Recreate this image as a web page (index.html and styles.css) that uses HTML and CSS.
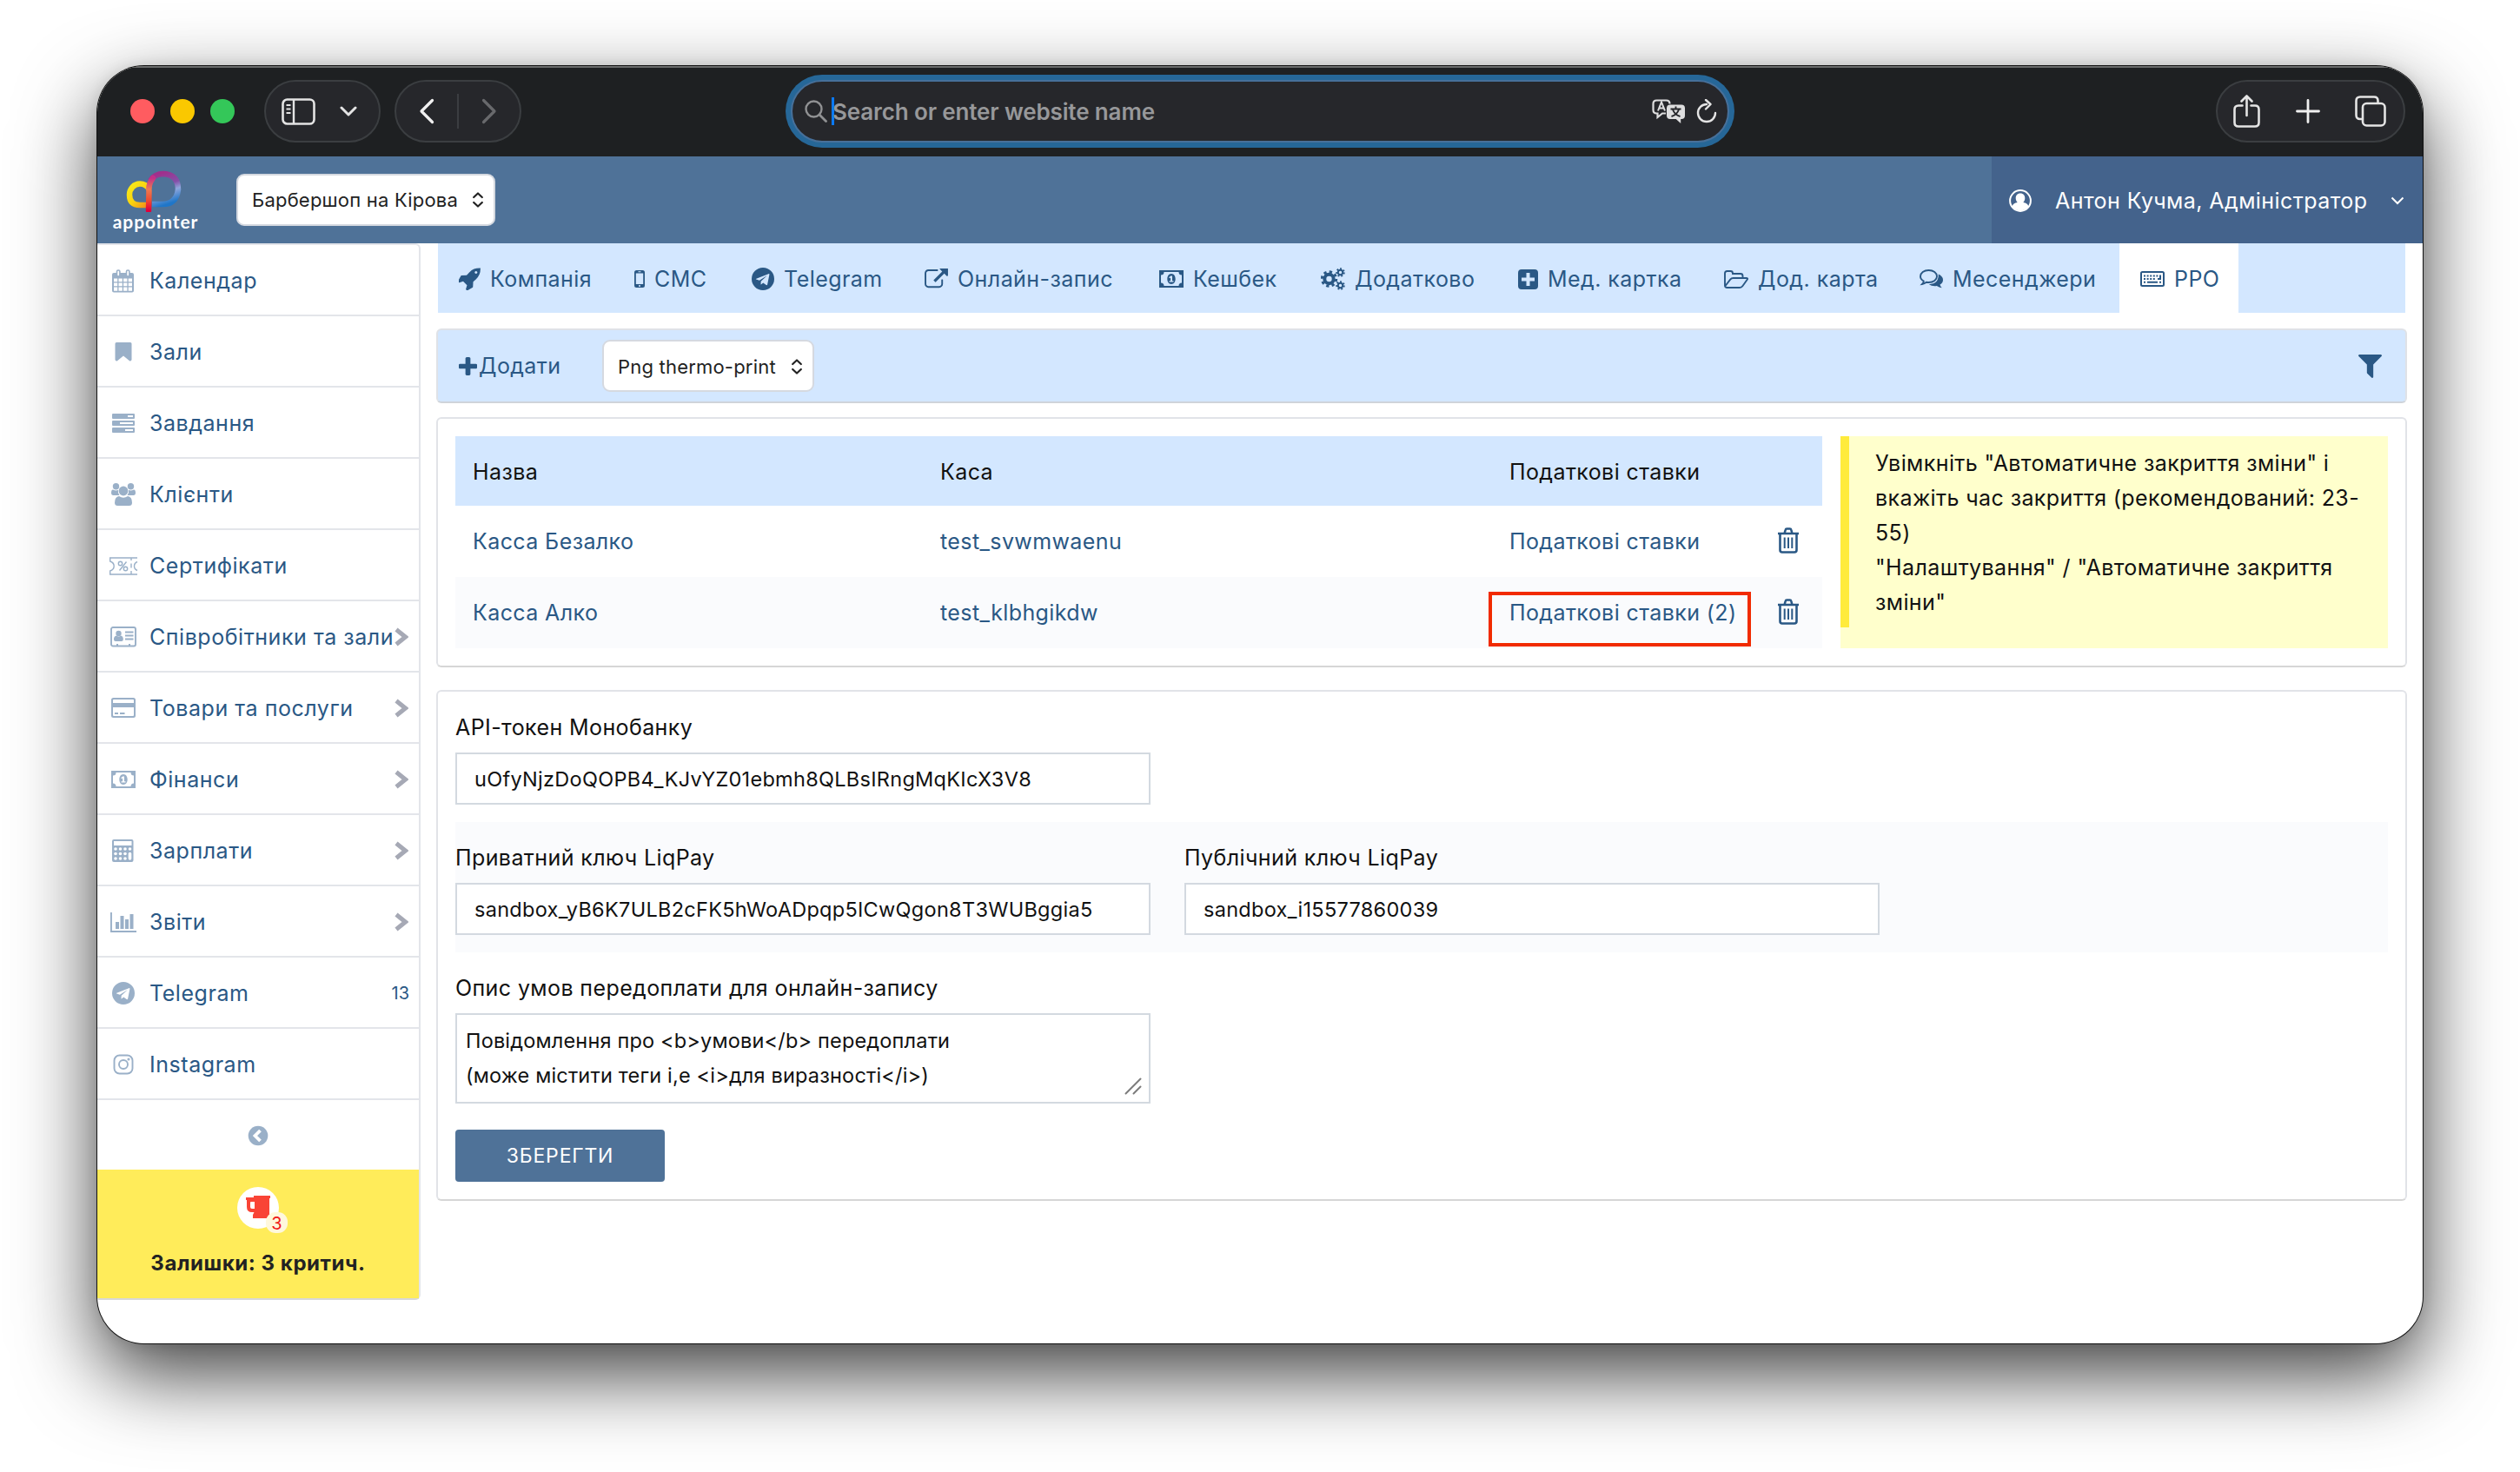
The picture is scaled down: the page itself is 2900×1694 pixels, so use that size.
FILE: index.html
```
<!DOCTYPE html>
<html lang="uk">
<head>
    <meta charset="UTF-8">
    <meta name="viewport" content="width=device-width, initial-scale=1.0">
    <link rel="stylesheet" href="styles.css">
    <title>Appointer - РРО</title>
</head>
<body>
    <!-- shared icons -->
    <svg class="sprite" width="0" height="0">
        <symbol id="i-telegram" viewBox="0 0 26 26"><path fill-rule="evenodd" d="M13 0a13 13 0 1 1 0 26a13 13 0 0 1 0-26zM19.3 7.2L5.3 12.7q-1 .5 0 .9l3.600 1.100 8.200-5.200q.7-.3.300.1l-6.700 6.200-.2 3.700q.5 0 .9-.4l1.800-1.700 3.600 2.700q1 .4 1.300-.7l2.300-11.300q.2-1.300-1.100-.9z"/></symbol>
        <symbol id="i-money" viewBox="0 0 28 20"><path fill-rule="evenodd" d="M0 0h28v20H0zM5.500 2a3.500 3.500 0 0 1-3.500 3.500v9a3.500 3.500 0 0 1 3.500 3.500h17a3.500 3.500 0 0 1 3.500-3.500v-9a3.500 3.500 0 0 1-3.500-3.500z"/><path fill-rule="evenodd" d="M14 4c3 0 4.700 2.800 4.700 6s-1.700 6-4.700 6-4.700-2.800-4.700-6 1.700-6 4.700-6zM13.200 6.500l-2 1.700.9 1.100 1-.8v3.800h-1.600v1.300h5v-1.300h-1.500V6.500z"/></symbol>
        <symbol id="i-trash" viewBox="0 0 26 30"><path d="M1 7h24M8.500 7l1.200-4.200q.3-1.300 1.500-1.300h3.600q1.200 0 1.500 1.300L17.500 7M3.500 7v19q0 2.500 2.500 2.500h14q2.500 0 2.500-2.500V7" fill="none" stroke="currentColor" stroke-width="2.600"/><path d="M8.700 11.500v12.500M13 11.500v12.500M17.300 11.500v12.500" stroke="currentColor" stroke-width="2"/></symbol>
        <symbol id="i-updown" viewBox="0 0 12 18"><path d="M1.200 6L6 1.500 10.800 6M1.200 12L6 16.500 10.800 12" fill="none" stroke="currentColor" stroke-width="2.200" stroke-linejoin="round" stroke-linecap="round"/></symbol>
        <symbol id="i-next" viewBox="0 0 16 22"><path d="M2 2.500L12.500 11 2 19.500" fill="none" stroke="currentColor" stroke-width="5"/></symbol>
    </svg>

    <div class="window">
        <div class="titlebar">
            <div class="lights">
                <span class="light red"></span>
                <span class="light yellow"></span>
                <span class="light green"></span>
            </div>
            <div class="pill pill-sidebar">
                <svg width="39" height="31" viewBox="0 0 39 31"><rect x="1.500" y="1.500" width="36" height="28" rx="5" fill="none" stroke="#e4e4e4" stroke-width="2.600"/><path d="M14 1.500v28" stroke="#e4e4e4" stroke-width="2.400"/><path d="M5.500 8h5M5.500 12.500h5M5.500 17h5" stroke="#e4e4e4" stroke-width="1.800"/></svg>
                <svg width="20" height="12" viewBox="0 0 20 12"><path d="M2 2l8 8 8-8" fill="none" stroke="#e4e4e4" stroke-width="3" stroke-linecap="round" stroke-linejoin="round"/></svg>
            </div>
            <div class="pill pill-nav">
                <svg width="18" height="30" viewBox="0 0 18 30"><path d="M15.500 2.500L3 15l12.500 12.500" fill="none" stroke="#f0f0f0" stroke-width="3.200" stroke-linecap="round" stroke-linejoin="round"/></svg>
                <span class="pill-line"></span>
                <svg width="18" height="30" viewBox="0 0 18 30"><path d="M2.500 2.500L15 15 2.500 27.500" fill="none" stroke="#68696c" stroke-width="3.200" stroke-linecap="round" stroke-linejoin="round"/></svg>
            </div>
            <div class="address">
                <svg width="26" height="26" viewBox="0 0 26 26"><circle cx="10.500" cy="10.500" r="9" fill="none" stroke="#909193" stroke-width="2.400"/><path d="M17 17l7.500 7.500" stroke="#909193" stroke-width="2.800" stroke-linecap="round"/></svg>
                <span class="caret"></span>
                <span class="placeholder">Search or enter website name</span>
                <svg class="translate" width="39" height="28" viewBox="0 0 39 28"><path d="M16 16.500h-4l-5.500 4.500v-4.500H5.500q-4 0-4-4v-7q0-4 4-4h11q4 0 4 4" fill="none" stroke="#dededf" stroke-width="2.200"/><path d="M7 13.500l4-10 4 10M8.500 10.500h5" fill="none" stroke="#dededf" stroke-width="2"/><path d="M21 6.500h13q4 0 4 4v8.500q0 4-4 4h-.8v5l-5.500-5H21q-4 0-4-4v-8.500q0-4 4-4z" fill="#dededf"/><path d="M27.500 8.500v3M21.500 11.500h12M24 12q2 6 8.500 8M31 12q-2 6-8.500 8" fill="none" stroke="#26272b" stroke-width="1.900"/></svg>
                <svg width="24" height="28" viewBox="0 0 24 28"><path d="M12 6a10 10 0 1 0 10 10" fill="none" stroke="#e4e4e4" stroke-width="2.400" stroke-linecap="round"/><path d="M11 1l5.500 5-5.500 5.500" fill="none" stroke="#e4e4e4" stroke-width="2.400" stroke-linecap="round" stroke-linejoin="round"/></svg>
            </div>
            <div class="pill pill-tools">
                <svg width="31" height="38" viewBox="0 0 31 38"><path d="M10.500 12.500H6q-4.500 0-4.500 4.500v15q0 4.500 4.500 4.500h19q4.500 0 4.500-4.500V17q0-4.500-4.500-4.500h-4.500M15.500 24V2M9.500 7.500l6-6 6 6" fill="none" stroke="#e4e4e4" stroke-width="2.600" stroke-linecap="round" stroke-linejoin="round"/></svg>
                <svg width="28" height="28" viewBox="0 0 28 28"><path d="M14 1.500v25M1.500 14h25" stroke="#f0f0f0" stroke-width="2.800" stroke-linecap="round"/></svg>
                <svg width="36" height="36" viewBox="0 0 36 36"><path d="M9 27H6q-4.500 0-4.500-4.500V6Q1.500 1.500 6 1.500h16q4.500 0 4.500 4.500v3" fill="none" stroke="#e4e4e4" stroke-width="2.600"/><rect x="9" y="9" width="25.500" height="25.500" rx="4.500" fill="none" stroke="#e4e4e4" stroke-width="2.600"/></svg>
            </div>
        </div>

        <div class="header">
            <div class="logo">
                <svg width="64" height="48" viewBox="0 0 64 48">
                    <defs>
                        <linearGradient id="g1" x1="0" y1="0" x2="1" y2="1"><stop offset="0" stop-color="#f4ea1c"/><stop offset=".5" stop-color="#fbd40e"/><stop offset="1" stop-color="#f08a1c"/></linearGradient>
                        <linearGradient id="g2" x1=".3" y1="0" x2=".6" y2="1"><stop offset="0" stop-color="#a02f8c"/><stop offset=".4" stop-color="#8450a8"/><stop offset=".62" stop-color="#8fa6dc"/><stop offset="1" stop-color="#1f76c8"/></linearGradient>
                        <linearGradient id="g3" x1="0" y1="0" x2="0" y2="1"><stop offset="0" stop-color="#c22f88"/><stop offset=".35" stop-color="#f07a50"/><stop offset=".7" stop-color="#f04a30"/><stop offset="1" stop-color="#e4003a"/></linearGradient>
                    </defs>
                    <path d="M27 22Q23 15.500 16 15.500A12 12.500 0 0 0 4 28Q4 40 16 40H24" fill="none" stroke="url(#g1)" stroke-width="6.500"/>
                    <path d="M28 12Q33 4 43 4Q60 5 60 22Q58 39 42 39H30" fill="none" stroke="url(#g2)" stroke-width="6.500"/>
                    <path d="M31 9Q25.500 16 26.500 24L26 46" fill="none" stroke="url(#g3)" stroke-width="6.500" stroke-linecap="round"/>
                </svg>
                <span>appointer</span>
            </div>
            <div class="select branch">Барбершоп на Кірова<svg width="12" height="18"><use href="#i-updown"/></svg></div>
            <div class="user">
                <svg width="26" height="26" viewBox="0 0 26 26"><circle cx="13" cy="13" r="11.900" fill="none" stroke="#fff" stroke-width="2"/><path d="M13 4.500c3.500 0 5.300 2.400 5.300 5.600 0 2-.8 3.900-2 5 3.500.3 5.500 2 6 4.500A11.500 11.500 0 0 1 13 24.500a11.500 11.500 0 0 1-9.300-4.900c.5-2.500 2.500-4.200 6-4.500-1.200-1.100-2-3-2-5 0-3.200 1.800-5.600 5.300-5.600z" fill="#fff"/></svg>
                <span>Антон Кучма, Адміністратор</span>
                <svg class="arrow" width="16" height="10" viewBox="0 0 16 10"><path d="M1.500 1.500L8 8l6.500-6.500" fill="none" stroke="#fff" stroke-width="2"/></svg>
            </div>
        </div>

        <div class="page">
            <div class="sidebar">
                <a class="item">
                    <svg width="26" height="27" viewBox="0 0 26 27"><path fill-rule="evenodd" d="M2 4h21q2 0 2 2v18.500q0 2-2 2H2q-2 0-2-2V6q0-2 2-2zM2 10.500v3.700h4.200v-3.700zM7.500 10.500v3.700h4.300v-3.700zM13.100 10.500v3.700h4.300v-3.700zM18.700 10.500v3.700H23v-3.700zM2 15.500v3.700h4.200v-3.700zM7.500 15.500v3.700h4.300v-3.700zM13.100 15.500v3.700h4.300v-3.700zM18.700 15.500v3.700H23v-3.700zM2 20.500v4.200h4.200v-4.200zM7.500 20.500v4.200h4.300v-4.200zM13.100 20.500v4.200h4.300v-4.200zM18.700 20.500v4.200H23v-4.200z"/><rect x="5.500" y="1" width="3.400" height="7" rx="1.500" fill="#fff" stroke="currentColor" stroke-width="1.600"/><rect x="16.500" y="1" width="3.400" height="7" rx="1.500" fill="#fff" stroke="currentColor" stroke-width="1.600"/></svg>
                    <span>Календар</span>
                </a>
                <a class="item">
                    <svg width="20" height="24" viewBox="0 0 20 24"><path d="M2 1h16q1.500 0 1.500 1.500v18.500q-.5 2-2.500 1.200L10 16.500l-7 5.700Q1 23 .5 21V2.500Q.5 1 2 1z"/></svg>
                    <span>Зали</span>
                </a>
                <a class="item">
                    <svg width="26" height="22" viewBox="0 0 26 22"><path fill-rule="evenodd" d="M1 0h24q1 0 1 1v4q0 1-1 1H1Q0 6 0 5V1q0-1 1-1zM18 2v2h6V2zM1 8h24q1 0 1 1v4q0 1-1 1H1q-1 0-1-1V9q0-1 1-1zM9 10v2h15v-2zM1 16h24q1 0 1 1v4q0 1-1 1H1q-1 0-1-1v-4q0-1 1-1zM15 18v2h9v-2z"/></svg>
                    <span>Завдання</span>
                </a>
                <a class="item">
                    <svg width="28" height="26" viewBox="0 0 28 26"><circle cx="5.500" cy="3.800" r="3.700"/><circle cx="22.500" cy="3.800" r="3.700"/><path d="M2 7.500q3 1.500 6 .5-.8 3.500 1.500 6H2q-2-.2-2-2.500Q0 7.500 2 7.500zM26 7.500q-3 1.500-6 .5.800 3.500-1.500 6H26q2-.2 2-2.500 0-4-2-4z"/><circle cx="14" cy="9" r="5.400"/><path d="M9 15q5 3.500 10 0 5 .5 5 7.500 0 3.500-3.500 3.500h-13Q4 26 4 22.500 4 15.500 9 15z"/></svg>
                    <span>Клієнти</span>
                </a>
                <a class="item">
                    <svg class="outline" width="32" height="21" viewBox="0 0 32 21" stroke-width="1.400"><path d="M32 1H.7v4q4.500 1.500 4.500 5.500T.7 16v4H32M25 1v3M25 7.500v5M25 16v4M32 5.500q-3.500 1.500-3.500 5t3.500 5"/><circle cx="12.500" cy="7.500" r="2.200"/><circle cx="18.500" cy="13.500" r="2.200"/><path d="M19.500 5.500l-8 10"/></svg>
                    <span>Сертифікати</span>
                </a>
                <a class="item">
                    <svg width="30" height="24" viewBox="0 0 30 24"><rect x="1" y="1" width="28" height="21.500" rx="2" fill="none" stroke="currentColor" stroke-width="1.900"/><circle cx="9.500" cy="8" r="3.200"/><path d="M7 10.500q2.500 2 5 0 3 .5 2.800 4.500 0 2-2 2H6q-2 0-2-2-.2-4 3-4.500zM17 5.500h9.500v2H17zM17 9.500h9.500v2H17zM17 13.500h9.500v2H17zM7 20h2v3H7zM21 20h2v3h-2z"/></svg>
                    <span>Співробітники та зали</span><svg class="next" width="16" height="22"><use href="#i-next"/></svg>
                </a>
                <a class="item">
                    <svg width="28" height="24" viewBox="0 0 28 24"><path fill-rule="evenodd" d="M2.500 0h23Q28 0 28 2.500v18q0 2.500-2.500 2.500h-23Q0 23 0 20.500v-18Q0 0 2.500 0zM2 3v3h24V3q0-1-1-1H3Q2 2 2 3zM2 11v9q0 1 1 1h22q1 0 1-1v-9zM4 17h4v2H4zM10 17h5.500v2H10z"/></svg>
                    <span>Товари та послуги</span><svg class="next" width="16" height="22"><use href="#i-next"/></svg>
                </a>
                <a class="item">
                    <svg width="28" height="20"><use href="#i-money"/></svg>
                    <span>Фінанси</span><svg class="next" width="16" height="22"><use href="#i-next"/></svg>
                </a>
                <a class="item">
                    <svg width="26" height="26" viewBox="0 0 26 26"><path fill-rule="evenodd" d="M2 0h20.500q2 0 2 2v22q0 2-2 2H2q-2 0-2-2V2Q0 0 2 0zM2 2v5h20.500V2z"/><g fill="#fff"><circle cx="4" cy="11" r="1.800"/><circle cx="9.500" cy="11" r="1.800"/><circle cx="15" cy="11" r="1.800"/><circle cx="20.500" cy="11" r="1.800"/><circle cx="4" cy="16.500" r="1.800"/><circle cx="9.500" cy="16.500" r="1.800"/><circle cx="15" cy="16.500" r="1.800"/><circle cx="4" cy="22" r="1.800"/><circle cx="9.500" cy="22" r="1.800"/><circle cx="15" cy="22" r="1.800"/><rect x="18.700" y="14.700" width="3.600" height="9" rx="1.800"/></g></svg>
                    <span>Зарплати</span><svg class="next" width="16" height="22"><use href="#i-next"/></svg>
                </a>
                <a class="item">
                    <svg width="30" height="23" viewBox="0 0 30 23"><path d="M0 0h1.900v21H30v2H0zM6 11h4v8H6zM11.500 4h4v15h-4zM17 8h4v11h-4zM22.500 2h4v17h-4z"/></svg>
                    <span>Звіти</span><svg class="next" width="16" height="22"><use href="#i-next"/></svg>
                </a>
                <a class="item">
                    <svg width="26" height="26"><use href="#i-telegram"/></svg>
                    <span>Telegram</span><b class="count">13</b>
                </a>
                <a class="item">
                    <svg class="outline" width="24" height="24" viewBox="0 0 24 24" stroke-width="1.900"><rect x="1.500" y="1.500" width="21" height="21" rx="6"/><circle cx="12" cy="12" r="5"/><circle cx="18" cy="6" r=".6"/></svg>
                    <span>Instagram</span>
                </a>
                <a class="collapse">
                    <svg width="24" height="24" viewBox="0 0 24 24"><circle cx="12" cy="12" r="11.300" fill="#9ab0c8"/><path d="M14.500 6L8.500 12l6 6" fill="none" stroke="#fff" stroke-width="3.800"/></svg>
                </a>
                <a class="stock">
                    <span class="cup">
                        <svg width="28" height="26" viewBox="0 0 28 26"><path fill-rule="evenodd" d="M0 2h9V0h19v3h-1v20l-.5 3H8v-4l1.500-3H7q-6 0-6-6V5H0zM5 8v5q0 2 2 2h3V7H6q-1 0-1 1z" fill="#f94436"/></svg>
                        <b>3</b>
                    </span>
                    <span class="stock-text">Залишки: 3 критич.</span>
                </a>
            </div>

            <div class="content">
                <div class="tabs">
                    <a><i><svg width="25" height="26" viewBox="100 120 1570 1600"><path d="M1440 448q0-40-28-68t-68-28-68 28-28 68 28 68 68 28 68-28 28-68zm224-288q0 249-75.500 430.500t-253.500 360.500q-81 80-195 176l-20 379q-2 16-16 26l-384 224q-7 4-16 4-12 0-23-9l-64-64q-13-14-8-32l85-276-281-281-276 85q-3 1-9 1-14 0-23-9l-64-64q-17-19-5-39l224-384q10-14 26-16l379-20q96-114 176-195 188-187 358-258t431-71q14 0 24 9.500t10 22.500z"/></svg></i>Компанія</a>
                    <a><i><svg width="12" height="20" viewBox="0 0 12 20"><path fill-rule="evenodd" d="M2.500 0h7Q12 0 12 2.500v15Q12 20 9.500 20h-7Q0 20 0 17.500v-15Q0 0 2.500 0zM1.800 3.500v12.500h8.400V3.500zM4.500 1.300v.9h3v-.9zM6 17a1 1 0 1 0 0 2.100A1 1 0 0 0 6 17z"/></svg></i>СМС</a>
                    <a><i><svg width="26" height="26"><use href="#i-telegram"/></svg></i>Telegram</a>
                    <a><i><svg width="27" height="24" viewBox="0 60 1792 1600"><path d="M1408 928v320q0 119-84.500 203.500t-203.500 84.500h-832q-119 0-203.500-84.500t-84.500-203.500v-832q0-119 84.500-203.500t203.500-84.500h704q14 0 23 9t9 23v64q0 14-9 23t-23 9h-704q-66 0-113 47t-47 113v832q0 66 47 113t113 47h832q66 0 113-47t47-113v-320q0-14 9-23t23-9h64q14 0 23 9t9 23zm384-864v512q0 26-19 45t-45 19-45-19l-176-176-652 652q-10 10-23 10t-23-10l-114-114q-10-10-10-23t10-23l652-652-176-176q-19-19-19-45t19-45 45-19h512q26 0 45 19t19 45z"/></svg></i>Онлайн-запис</a>
                    <a><i><svg width="28" height="20"><use href="#i-money"/></svg></i>Кешбек</a>
                    <a><i><svg class="outline" width="28" height="26" viewBox="0 0 28 26"><circle cx="9.500" cy="13" r="5.200" stroke-width="4"/><circle cx="9.500" cy="13" r="8.200" stroke-width="3" stroke-dasharray="3.220 3.220"/><circle cx="22.500" cy="5.500" r="2.700" stroke-width="2"/><circle cx="22.500" cy="5.500" r="4.300" stroke-width="1.900" stroke-dasharray="1.930 1.930"/><circle cx="22.500" cy="20.500" r="2.700" stroke-width="2"/><circle cx="22.500" cy="20.500" r="4.300" stroke-width="1.900" stroke-dasharray="1.930 1.930"/></svg></i>Додатково</a>
                    <a><i><svg width="23" height="23" viewBox="0 0 23 23"><path fill-rule="evenodd" d="M4 0h15q4 0 4 4v15q0 4-4 4H4q-4 0-4-4V4q0-4 4-4zM9.500 4v5.500H4v4h5.500V19h4v-5.500H19v-4h-5.500V4z"/></svg></i>Мед. картка</a>
                    <a><i><svg width="28" height="21" viewBox="0 0 28 21"><path d="M1 18V3.500Q1 1 3.500 1h4Q10 1 10 3.500V4h9q2.500 0 2.500 2.500V9M1.500 18L7.200 10.700Q8.500 9 10.500 9h15q2.500 0 1 2l-5 7q-1.300 2-3.500 2H3.500Q1 20 1 17.500" fill="none" stroke="currentColor" stroke-width="1.900"/></svg></i>Дод. карта</a>
                    <a><i><svg width="27" height="22" viewBox="0 0 27 22"><path d="M10.500 1C16 1 20 4 20 8s-4 7-9.500 7q-1.300 0-2.500-.2Q5.500 16.700 3 17q1.700-1.700 1.800-3.500Q1 11.500 1 8c0-4 4-7 9.500-7z" fill="none" stroke="currentColor" stroke-width="1.900"/><path d="M21.700 5.500Q27 8 27 12q0 3.500-3.500 5.500.2 1.800 2.200 3.700-3.200-.2-5.900-2.200-5.300.8-9-1.800Q22.500 16.500 21.700 5.500z"/></svg></i>Месенджери</a>
                    <a class="active"><i><svg width="28" height="18" viewBox="0 0 28 18"><rect x="1" y="1" width="26" height="16" rx="1.500" fill="none" stroke="currentColor" stroke-width="2"/><path d="M4 5.500h20" stroke="currentColor" stroke-width="2" stroke-dasharray="2 1.600"/><path d="M4 9h14" stroke="currentColor" stroke-width="2" stroke-dasharray="2 1.600"/><path d="M20 9h3V5M4 12.800h2M8 12.800h12M22 12.800h2" fill="none" stroke="currentColor" stroke-width="2"/></svg></i>РРО</a>
                </div>

                <div class="toolbar">
                    <a class="add"><svg width="21" height="21" viewBox="192 128 1408 1408"><path d="M1600 736v192q0 40-28 68t-68 28h-416v416q0 40-28 68t-68 28h-192q-40 0-68-28t-28-68v-416h-416q-40 0-68-28t-28-68v-192q0-40 28-68t68-28h416v-416q0-40 28-68t68-28h192q40 0 68 28t28 68v416h416q40 0 68 28t28 68z"/></svg>Додати</a>
                    <div class="select printer">Png thermo-print<svg width="12" height="18"><use href="#i-updown"/></svg></div>
                    <svg class="filter" width="27" height="27" viewBox="190 256 1412 1408"><path d="M1595 295q17 41-14 70l-493 493v742q0 42-39 59-13 5-25 5-27 0-45-19l-256-256q-19-19-19-45v-486l-493-493q-31-29-14-70 17-39 59-39h1280q42 0 59 39z"/></svg>
                </div>

                <div class="card registers">
                    <table class="table">
                        <tr><th>Назва</th><th>Каса</th><th>Податкові ставки</th><th></th></tr>
                        <tr><td>Касса Безалко</td><td>test_svwmwaenu</td><td>Податкові ставки</td><td><svg width="26" height="30"><use href="#i-trash"/></svg></td></tr>
                        <tr><td>Касса Алко</td><td>test_klbhgikdw</td><td class="marked">Податкові ставки (2)<span class="mark"></span></td><td><svg width="26" height="30"><use href="#i-trash"/></svg></td></tr>
                    </table>
                    <div class="hint">
                        <div class="hint-text">Увімкніть "Автоматичне закриття зміни" і вкажіть час закриття (рекомендований: 23-55)<br>"Налаштування" / "Автоматичне закриття зміни"</div>
                    </div>
                </div>

                <div class="card form">
                    <div class="row">
                        <label>API-токен Монобанку<input type="text" value="uOfyNjzDoQOPB4_KJvYZ01ebmh8QLBsIRngMqKIcX3V8"></label>
                    </div>
                    <div class="row gray">
                        <label>Приватний ключ LiqPay<input type="text" value="sandbox_yB6K7ULB2cFK5hWoADpqp5ICwQgon8T3WUBggia5"></label>
                        <label>Публічний ключ LiqPay<input type="text" value="sandbox_i15577860039"></label>
                    </div>
                    <div class="row">
                        <label>Опис умов передоплати для онлайн-запису<textarea>Повідомлення про &lt;b&gt;умови&lt;/b&gt; передоплати
(може містити теги i,e &lt;i&gt;для виразності&lt;/i&gt;)</textarea><svg class="grip" width="20" height="20" viewBox="0 0 20 20"><path d="M1.500 18.500l17-17M10.500 18.500l8-8" stroke="#7c7c7c" stroke-width="2" stroke-linecap="round"/></svg></label>
                    </div>
                    <button class="save">ЗБЕРЕГТИ</button>
                </div>
            </div>
        </div>
    </div>
</body>
</html>
```
FILE: styles.css
```
* {
    box-sizing: border-box;
}

body {
    margin: 0;
    padding: 76px 112px 0;
    height: 1694px;
    overflow: hidden;
    background-color: #fff;
    font-family: Inter, "Liberation Sans", sans-serif;
    font-size: 25px;
    color: #111;
}

svg {
    flex: none;
    fill: currentColor;
}

.outline {
    fill: none;
    stroke: currentColor;
}

.sprite {
    position: absolute;
}

.window {
    height: 1470px;
    border-radius: 54px;
    overflow: hidden;
    background-color: #fff;
    box-shadow: 0 0 0 1px #111, 0 0 16px rgba(0, 0, 0, 0.1), 0 36px 92px rgba(0, 0, 0, 0.75);
}

/* browser bar */
.titlebar {
    display: flex;
    align-items: center;
    height: 104px;
    padding: 0 20px 0 38px;
    background-color: #1e2022;
    box-shadow: inset 0 2px 0 #6b6c6c;
}

.lights {
    display: flex;
    gap: 18px;
    width: 154px;
}

.light {
    width: 28px;
    height: 28px;
    border-radius: 50%;
}

.red { background-color: #ff5c60; }
.yellow { background-color: #fac800; }
.green { background-color: #34c759; }

.pill {
    display: flex;
    align-items: center;
    height: 72px;
    border: 2px solid #3b3e41;
    border-radius: 36px;
    background-color: #26272b;
}

.pill-sidebar {
    width: 134px;
    padding-left: 18px;
    gap: 28px;
}

.pill-nav {
    width: 146px;
    margin-left: 16px;
    padding: 0 26px;
    justify-content: space-between;
}

.pill-line {
    width: 2px;
    height: 40px;
    background-color: #3b3d41;
}

.address {
    display: flex;
    align-items: center;
    width: 1080px;
    height: 72px;
    margin-left: 310px;
    padding: 0 12px 0 14px;
    border: 2px solid #47709a;
    border-radius: 36px;
    background-color: #26272b;
    box-shadow: 0 0 0 6px #266798;
}

.caret {
    width: 3px;
    height: 32px;
    margin-left: 5px;
    background-color: #0a7aff;
}

.placeholder {
    flex: 1;
    margin-left: -2px;
    font-size: 26px;
    font-weight: 600;
    letter-spacing: -0.13px;
    color: #97989a;
}

.translate {
    margin-right: 12px;
}

.pill-tools {
    width: 218px;
    margin-left: auto;
    padding: 0 20px 0 18px;
    justify-content: space-between;
}

/* app header */
.header {
    display: flex;
    align-items: center;
    height: 100px;
    background-color: #4f7298;
}

.logo {
    display: flex;
    flex-direction: column;
    align-items: center;
    width: 134px;
    padding-top: 2px;
    color: #fff;
    font-family: Lato, sans-serif;
    font-size: 21px;
    line-height: 22px;
    font-weight: 700;
    letter-spacing: 0.9px;
}

.logo svg {
    margin-right: 4px;
}

.select {
    display: flex;
    align-items: center;
    justify-content: space-between;
    height: 60px;
    border: 2px solid #d5d9e0;
    border-radius: 9px;
    background-color: #fff;
    font-size: 22px;
    letter-spacing: 0.2px;
    color: #222;
}

.branch {
    width: 298px;
    margin-left: 26px;
    padding: 0 12px 0 16px;
}

.user {
    display: flex;
    align-items: center;
    width: 496px;
    height: 100px;
    margin-left: auto;
    padding: 2px 21px 0 20px;
    background-color: #44638c;
    color: #fff;
    font-size: 25px;
    letter-spacing: 0.43px;
}

.user span {
    margin-left: 27px;
}

.arrow {
    margin-left: auto;
}

.page {
    display: flex;
    align-items: flex-start;
    gap: 18px;
}

/* left menu */
.sidebar {
    width: 372px;
    border: 2px solid #e3e5ea;
    border-left: 0;
    border-bottom-color: #d8d8d8;
    border-radius: 0 6px 6px 0;
    font-size: 25px;
    letter-spacing: 0.55px;
    color: #2a5885;
}

.item {
    position: relative;
    display: flex;
    align-items: center;
    height: 82px;
    padding-top: 2px;
    border-bottom: 2px solid #e3e5ea;
}

.item > svg:first-child {
    width: 60px;
    color: #9ab0c8;
}

.next {
    position: absolute;
    right: 12px;
    color: #a6a9b5;
}

.count {
    margin-left: auto;
    margin-right: 11px;
    font-size: 20px;
    font-weight: 400;
    letter-spacing: 0;
}

.collapse {
    display: flex;
    align-items: center;
    justify-content: center;
    height: 80px;
    padding-top: 2px;
}

.stock {
    display: flex;
    flex-direction: column;
    align-items: center;
    height: 148px;
    padding-top: 20px;
    background-color: #ffec5a;
}

.cup {
    position: relative;
    display: flex;
    align-items: center;
    justify-content: center;
    width: 48px;
    height: 48px;
    border-radius: 50%;
    background-color: #fff;
}

.cup svg {
    margin-bottom: 3px;
}

.cup b {
    position: absolute;
    left: 33px;
    top: 29px;
    width: 25px;
    height: 24px;
    border-radius: 11px;
    background-color: #fff8dc;
    color: #f01818;
    font-size: 20px;
    line-height: 26px;
    font-weight: 400;
    letter-spacing: 0;
    text-align: center;
}

.stock-text {
    margin-top: 25px;
    font-size: 24px;
    font-weight: 700;
    letter-spacing: 0.56px;
    color: #222;
}

/* right part */
.content {
    flex: 1;
    padding-right: 18px;
}

.tabs {
    display: grid;
    grid-template-columns: 202px 135px 199px 270px 186px 227px 237px 225px 254px 137px;
    height: 80px;
    margin: 0 2px;
    background-color: #d3e7ff;
    font-size: 25px;
    letter-spacing: 0.45px;
    color: #2a5885;
}

.tabs a {
    display: flex;
    align-items: center;
    padding: 2px 0 0 24px;
    white-space: nowrap;
}

.tabs i {
    display: flex;
    margin-right: 11px;
}

.tabs .active {
    background-color: #fff;
}

.toolbar {
    display: flex;
    align-items: center;
    height: 86px;
    margin-top: 18px;
    padding: 0 27px 0 24px;
    border: 2px solid #dfe2e7;
    border-bottom-color: #cfd4da;
    border-radius: 6px;
    background-color: #d3e7ff;
    color: #2a5885;
}

.add {
    display: flex;
    align-items: center;
    width: 165px;
    gap: 2px;
    font-size: 25px;
    letter-spacing: 0.4px;
}

.printer {
    width: 244px;
    padding: 1px 12px 0 16px;
}

.filter {
    margin-left: auto;
}

.card {
    border: 2px solid #e1e3e8;
    border-bottom-color: #d6d6d6;
    border-radius: 6px;
}

.registers {
    display: flex;
    gap: 21px;
    height: 288px;
    margin-top: 16px;
    padding: 20px;
}

.table {
    width: 1573px;
    height: 244px;
    table-layout: fixed;
    border-collapse: collapse;
    letter-spacing: 0.4px;
    color: #2a5885;
}

.table th {
    width: 538px;
    height: 80px;
    padding: 2px 20px 0;
    background-color: #d3e7ff;
    color: #111;
    font-weight: 400;
    text-align: left;
}

.table th:nth-child(2) { width: 655px; }
.table th:nth-child(3) { width: 308px; }
.table th:nth-child(4) { width: 72px; }

.table td {
    height: 82px;
    padding: 0 20px;
    white-space: nowrap;
}

.table td svg {
    display: block;
    margin-bottom: 2px;
}

.table tr:nth-child(3) td {
    background-color: #fafbfd;
}

.marked {
    position: relative;
}

/* red frame around the rates link */
.mark {
    position: absolute;
    left: -4px;
    top: 17px;
    width: 302px;
    height: 63px;
    border: 4px solid #f12b00;
}

.hint {
    flex: 1;
    background-color: #ffffcc;
}

.hint-text {
    padding: 11px 20px 9px 30px;
    border-left: 10px solid #ffeb3b;
    line-height: 40px;
    letter-spacing: 0.4px;
}

.form {
    height: 588px;
    margin-top: 26px;
    padding: 0 20px;
}

.row {
    display: flex;
    gap: 39px;
    height: 150px;
    padding-top: 20px;
}

.gray {
    background-color: #fafbfd;
}

.row label {
    position: relative;
    display: flex;
    flex-direction: column;
    width: 800px;
    line-height: 42px;
    letter-spacing: 0.4px;
}

.row input,
.row textarea {
    width: 800px;
    height: 60px;
    margin: 8px 0 0;
    padding: 0 20px;
    border: 2px solid #d3d9e0;
    border-radius: 0;
    outline: none;
    background-color: #fff;
    font-family: inherit;
    font-size: 23.5px;
    letter-spacing: 0.29px;
    color: #111;
}

.row textarea {
    flex: none;
    height: 104px;
    padding: 10px 10px 0;
    overflow: hidden;
    resize: none;
    line-height: 40px;
    letter-spacing: 0.18px;
}

.grip {
    position: absolute;
    right: 10px;
    top: 124px;
}

.save {
    display: block;
    width: 241px;
    height: 60px;
    margin-top: 54px;
    border: 0;
    border-radius: 4px;
    background-color: #4f7298;
    color: #fff;
    font-family: inherit;
    font-size: 23px;
    letter-spacing: 0.83px;
}
```
